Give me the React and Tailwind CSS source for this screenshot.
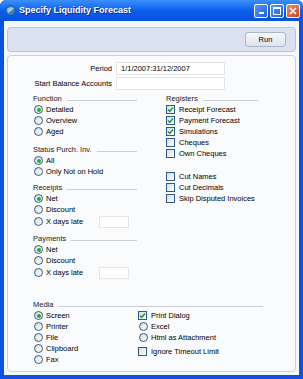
import React from 'react';

const Radio = ({ label, checked, children }) => (
  <div className="flex h-[11px] items-center">
    <span className="ml-[1px] flex h-[9px] w-[9px] items-center justify-center rounded-full border border-[#2a5b8c] bg-gradient-to-br from-[#dcdcd4] to-white">
      {checked && <span className="h-[4px] w-[4px] rounded-full bg-[#2fa52f]" />}
    </span>
    <span className="ml-[3px]">{label}</span>
    {children}
  </div>
);

const Check = ({ label, checked }) => (
  <div className="flex h-[11px] items-center">
    <span className="flex h-[9px] w-[9px] items-center justify-center border border-[#2a5b8c] bg-gradient-to-br from-[#dcdcd4] to-white">
      {checked && (
        <svg width="7" height="7" viewBox="0 0 7 7">
          <path d="M1 3.5 L2.8 5.3 L6 1.6" fill="none" stroke="#22a022" strokeWidth="1.5" />
        </svg>
      )}
    </span>
    <span className="ml-[4px]">{label}</span>
  </div>
);

// section title with the thin rule after it
const Header = ({ title, className = '' }) => (
  <div className={`flex h-[11px] items-center ${className}`}>
    <span className="text-[#222]">{title}</span>
    <span className="ml-[5px] mt-[3px] h-px flex-1 bg-[#c9ced6]" />
  </div>
);

const Field = ({ className = '' }) => (
  <div className={`border border-[#e6e6e6] bg-white ${className}`} />
);

const App = () => {
  return (
    <div className="flex h-[379px] w-[303px] flex-col overflow-hidden rounded-t-[6px] bg-[#0b52e0] font-['Liberation_Sans',Arial,sans-serif] text-[7.5px] leading-none text-black">
      {/* title bar */}
      <div className="flex h-[21px] shrink-0 items-center bg-gradient-to-b from-[#3d8ffb] via-[#0c5eef] to-[#0851dc] pl-[5px] pr-[3px]">
        <svg width="11" height="11" viewBox="0 0 11 11">
          <circle cx="5.5" cy="5.5" r="5" fill="#3a7fb8" />
          <path d="M2 4 Q5 1 9 3 Q7 6 3 8 Z" fill="#8fd0e8" />
          <circle cx="5.5" cy="5.5" r="5" fill="none" stroke="#1d4f86" strokeWidth="0.8" />
        </svg>
        <span className="ml-[3px] text-[9px] font-bold text-white [text-shadow:1px_1px_0_#0a2f8a]">
          Specify Liquidity Forecast
        </span>
        <div className="ml-auto flex gap-[2px]">
          <div className="flex h-[14px] w-[14px] items-end justify-center rounded-[2px] border border-white bg-gradient-to-br from-[#5595fa] to-[#2160e4] pb-[3px]">
            <span className="h-[2px] w-[5px] bg-white" />
          </div>
          <div className="flex h-[14px] w-[14px] items-center justify-center rounded-[2px] border border-white bg-gradient-to-br from-[#5595fa] to-[#2160e4]">
            <span className="h-[8px] w-[8px] border border-t-2 border-white" />
          </div>
          <div className="flex h-[14px] w-[14px] items-center justify-center rounded-[2px] border border-white bg-gradient-to-br from-[#ec8a6a] to-[#d2401a]">
            <svg width="8" height="8" viewBox="0 0 8 8">
              <path d="M1 1 L7 7 M7 1 L1 7" stroke="white" strokeWidth="1.6" />
            </svg>
          </div>
        </div>
      </div>

      {/* client area */}
      <div className="mx-[4px] mb-[4px] flex flex-1 flex-col bg-[#f4f7fc] px-[3px] pb-[3px] pt-[6px]">
        <div className="flex h-[25px] shrink-0 items-center justify-end rounded-[4px] border border-[#b5c6de] bg-[#dae2ef] pr-[9px]">
          <button className="h-[15px] w-[41px] rounded-[3px] border border-[#a9b7cb] bg-gradient-to-b from-[#f7f8fb] to-[#dde3ec] text-[7.5px] text-black">
            Run
          </button>
        </div>

        <div className="mt-[3px] flex flex-1 flex-col rounded-[4px] border border-[#c4d1e4] bg-[#fafbfd] pt-[6px]">
          <div className="flex flex-col gap-[2px]">
            <div className="flex items-center">
              <span className="w-[104px] text-right">Period</span>
              <div className="ml-[4px] flex h-[13px] w-[109px] items-center border border-[#e6e6e6] bg-white pl-[4px]">
                1/1/2007:31/12/2007
              </div>
            </div>
            <div className="flex items-center">
              <span className="w-[104px] text-right">Start Balance Accounts</span>
              <Field className="ml-[4px] h-[13px] w-[109px]" />
            </div>
          </div>

          <div className="ml-[25px] mt-[3px] flex">
            <div className="flex w-[104px] flex-col">
              <Header title="Function" />
              <Radio label="Detailed" checked />
              <Radio label="Overview" />
              <Radio label="Aged" />

              <Header title="Status Purch. Inv." className="mt-[7px]" />
              <Radio label="All" checked />
              <Radio label="Only Not on Hold" />

              <Header title="Receipts" className="mt-[5px]" />
              <Radio label="Net" checked />
              <Radio label="Discount" />
              <div className="flex h-[13px] items-center">
                <Radio label="X days late" />
                <Field className="ml-auto mr-[8px] h-[12px] w-[30px]" />
              </div>

              <Header title="Payments" className="mt-[5px]" />
              <Radio label="Net" checked />
              <Radio label="Discount" />
              <div className="flex h-[13px] items-center">
                <Radio label="X days late" />
                <Field className="ml-auto mr-[8px] h-[12px] w-[30px]" />
              </div>
            </div>

            <div className="ml-[29px] flex w-[92px] flex-col">
              <Header title="Registers" />
              <Check label="Receipt Forecast" checked />
              <Check label="Payment Forecast" checked />
              <Check label="Simulations" checked />
              <Check label="Cheques" />
              <Check label="Own Cheques" />
              <div className="mt-[12px]" />
              <Check label="Cut Names" />
              <Check label="Cut Decimals" />
              <Check label="Skip Disputed Invoices" />
            </div>
          </div>

          <div className="ml-[25px] mt-[20px] w-[230px]">
            <Header title="Media" />
            <div className="flex">
              <div className="flex w-[105px] flex-col">
                <Radio label="Screen" checked />
                <Radio label="Printer" />
                <Radio label="File" />
                <Radio label="Clipboard" />
                <Radio label="Fax" />
              </div>
              <div className="flex flex-col">
                <Check label="Print Dialog" checked />
                <Radio label="Excel" />
                <Radio label="Html as Attachment" />
                <div className="mt-[3px]" />
                <Check label="Ignore Timeout Limit" />
              </div>
            </div>
          </div>
        </div>
      </div>
    </div>
  );
};

export default App;
